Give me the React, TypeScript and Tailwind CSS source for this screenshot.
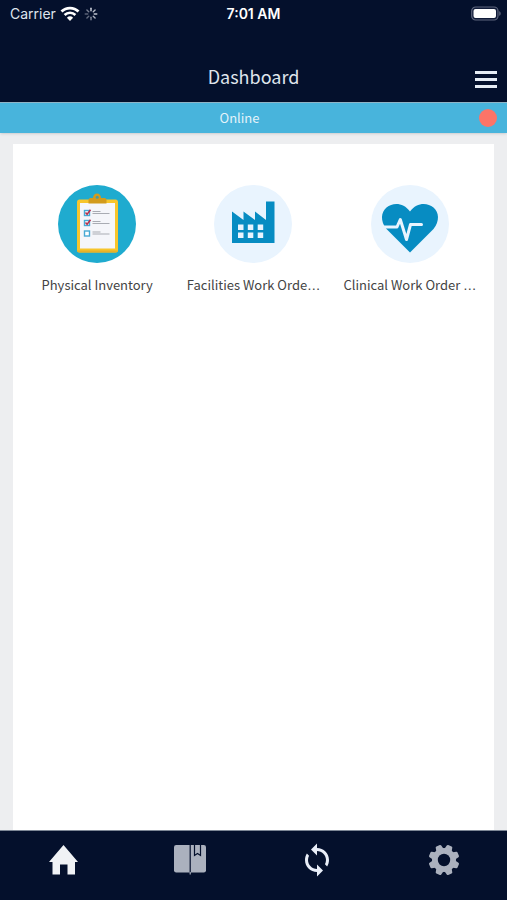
import type { ReactNode } from "react";

function WifiIcon() {
  return (
    <svg className="h-4 w-5" viewBox="0 0 20 16" fill="none" stroke="#fff" aria-hidden="true">
      <path d="M1.5 5.6a12 12 0 0 1 17 0" strokeWidth="2.8" />
      <path d="M4.6 9a7.6 7.6 0 0 1 10.8 0" strokeWidth="2.6" />
      <path d="M10 15 6.9 11.7a4.5 4.5 0 0 1 6.2 0Z" fill="#fff" stroke="none" />
    </svg>
  );
}

function SpinnerIcon() {
  const spokes = [1, 0.85, 0.9, 0.8, 0.6, 0.45, 0.4, 0.55];
  return (
    <svg className="size-3.5" viewBox="0 0 14 14" stroke="#d5d9e2" strokeWidth="1.4" strokeLinecap="round" aria-hidden="true">
      {spokes.map((o, i) => (
        <path key={i} d="M7 1.2v2.6" opacity={o} transform={`rotate(${i * 45} 7 7)`} />
      ))}
    </svg>
  );
}

function BatteryIcon() {
  return (
    <svg className="h-4 w-[30px]" viewBox="0 0 30 16" aria-hidden="true">
      <rect x="0.7" y="1" width="26.3" height="13" rx="4" fill="#101b38" stroke="#5d657c" strokeWidth="1.2" />
      <rect x="2.5" y="3" width="22.5" height="9" rx="2" fill="#fff" />
      <path d="M28.200 5.200c2 .6 2 4 0 4.600Z" fill="#5d657c" />
    </svg>
  );
}

function ClipboardIcon() {
  return (
    <svg className="size-[78px]" viewBox="0 0 78 78" aria-hidden="true">
      <circle cx="39" cy="39" r="39" fill="#1fabcf" />
      <rect x="19" y="14.5" width="41" height="53" rx="2.5" fill="#f7c52b" />
      <path d="M19 65.5a2 2 0 0 0 2 2h37a2 2 0 0 0 2-2Z" fill="#e6b02a" />
      <rect x="22" y="18" width="35" height="45.5" fill="#f5f6fa" />
      <path d="M30.500 18.500v-3.500q0-2 2-2h2.500a4 4.500 0 0 1 8 0H46.500q2 0 2 2v3.500Z" fill="#d29b1c" />
      <circle cx="39.2" cy="12.2" r="1.5" fill="#4a9ba0" />
      {[25.5, 35.5, 46].map((y, i) => (
        <g key={y}>
          <rect x="26.5" y={y} width="5" height="5" fill="#fff" stroke="#48a9d4" strokeWidth="1.4" />
          {i < 2 && <path d={`M27.500 ${y + 2}l1.600 1.800 3.400-4.600`} fill="none" stroke="#b8324c" strokeWidth="1.5" />}
          <path d={`M34.500 ${y + 1}h8M34.500 ${y + 3}h17`} stroke="#a9acb3" strokeWidth="1" />
        </g>
      ))}
    </svg>
  );
}

function FactoryIcon() {
  return (
    <svg className="size-[78px]" viewBox="0 0 78 78" aria-hidden="true">
      <circle cx="39" cy="39" r="39" fill="#e9f4fe" />
      <path d="M18 26.500 29.500 35v-8.500L41 35v-8.500L52 35V16.500h8.500V58H18Z" fill="#078cc2" />
      <path d="M24 39.500h5.500v5.500h-5.500ZM33.800 39.500h5.500v5.500h-5.500ZM43.700 39.500h5.500v5.500h-5.500ZM24 47.500h5.500v5.500h-5.500ZM33.800 47.500h5.500v5.500h-5.500ZM43.700 47.500h5.500v5.500h-5.500Z" fill="#e9f4fe" />
    </svg>
  );
}

function HeartIcon() {
  return (
    <svg className="size-[78px]" viewBox="0 0 78 78" aria-hidden="true">
      <circle cx="39" cy="39" r="39" fill="#e9f4fe" />
      <path d="M39 67.500 15.500 44C9 36 10 27 15.500 22.500c6.500-5.300 17-5 23.500 4 6.500-9 17-9.300 23.500-4C68 27 69 36 62.500 44Z" fill="#078cc2" />
      <path d="M11 42h15l3.300-7.500L35.500 54.500 39.500 39.500h11" fill="none" stroke="#e9f4fe" strokeWidth="3" strokeLinecap="round" strokeLinejoin="round" />
    </svg>
  );
}

function HomeIcon() {
  return (
    <svg className="size-8" viewBox="0 0 32 32" fill="#f0f2f5" aria-hidden="true">
      <path d="M16.500 1 31 18H28V30.500H20.500V20.500H13V30.500H5.500V18H2Z" />
    </svg>
  );
}

function BookIcon() {
  return (
    <svg className="h-8 w-[34px]" viewBox="0 0 34 32" aria-hidden="true">
      <rect x="1" y="1" width="32" height="27.5" rx="2.2" fill="#abb1be" />
      <path d="M17.200 1v29" stroke="#04102c" strokeWidth="1.2" />
      <path d="M17.200 28v2.500" stroke="#abb1be" strokeWidth="1.2" />
      <path d="M21.500 1v10.500l3-2 3 2V1" fill="#abb1be" stroke="#04102c" strokeWidth="1.2" />
    </svg>
  );
}

function SyncIcon() {
  return (
    <svg className="size-9" viewBox="0 0 24 24" fill="#e9eef8" aria-hidden="true">
      <path d="M12 4V1L8 5l4 4V6c3.310 0 6 2.690 6 6 0 1.010-.250 1.970-.700 2.800l1.460 1.460C19.540 15.030 20 13.570 20 12c0-4.420-3.580-8-8-8zm0 14c-3.310 0-6-2.690-6-6 0-1.010.250-1.970.700-2.800L5.240 7.740C4.460 8.970 4 10.430 4 12c0 4.420 3.580 8 8 8v3l4-4-4-4v3z" />
    </svg>
  );
}

function GearIcon() {
  const teeth = [22.5, 67.5, 112.5, 157.5, 202.5, 247.5, 292.5, 337.5];
  return (
    <svg className="size-8" viewBox="0 0 32 32" aria-hidden="true">
      <g fill="#abb1be">
        {teeth.map((a) => (
          <path key={a} d="M12 6 13 1.600q.2-1 1.200-1h3.600q1 0 1.200 1L20 6Z" transform={`rotate(${a} 16 16)`} />
        ))}
        <circle cx="16" cy="16" r="12" />
      </g>
      <circle cx="16" cy="16" r="6.2" fill="#04102c" />
    </svg>
  );
}

function Tile({ icon, label, cut = false }: { icon: ReactNode; label: string; cut?: boolean }) {
  return (
    <button type="button" className="flex flex-col items-center gap-3 whitespace-nowrap text-[13px] leading-5 text-[#444444]">
      {icon}
      <span>
        {label}
        {cut && <span className="font-['DejaVu_Sans',sans-serif]">…</span>}
      </span>
    </button>
  );
}

export default function App() {
  const tabs = [
    { name: "Home", icon: <HomeIcon /> },
    { name: "Catalog", icon: <BookIcon /> },
    { name: "Sync", icon: <SyncIcon /> },
    { name: "Settings", icon: <GearIcon /> },
  ];
  return (
    <div className="flex min-h-screen flex-col bg-[#edeef0] font-['Noto_Sans_CJK_SC','Noto_Sans',sans-serif]">
      <header className="bg-[#04102c] text-[#dfe4ec]">
        <div className="grid h-[50px] grid-cols-[1fr_auto_1fr] items-start px-1.5 pt-1 font-['Inter',sans-serif] text-sm leading-5">
          <div className="flex items-center gap-1 pl-1">
            <span>Carrier</span>
            <WifiIcon />
            <SpinnerIcon />
          </div>
          <div className="text-center font-semibold text-white">7:01 AM</div>
          <div className="flex justify-end pt-0.5">
            <BatteryIcon />
          </div>
        </div>
        <div className="grid h-[52px] grid-cols-[1fr_auto_1fr] items-center px-2.5">
          <h1 className="col-start-2 text-lg leading-6">Dashboard</h1>
          <button type="button" aria-label="Menu" className="flex flex-col gap-1 justify-self-end pt-1.5">
            <span className="h-[3px] w-[22px] bg-[#e6ecf4]" />
            <span className="h-[3px] w-[22px] bg-[#e6ecf4]" />
            <span className="h-[3px] w-[22px] bg-[#e6ecf4]" />
          </button>
        </div>
      </header>
      <div className="flex h-[31px] items-center border-t border-[#8fb4c6] bg-[#48b4dc] pr-2.5 text-[13px] leading-5 text-[#e3f3fa] shadow-sm">
        <span className="grow text-center">Online</span>
        <span className="size-[18px] rounded-full bg-[#fc7468]" />
      </div>
      <main className="flex grow flex-col px-[13px] pt-[11px]">
        <section className="grid grow auto-rows-max grid-cols-3 bg-white px-1.5 pt-[41px]">
          <Tile icon={<ClipboardIcon />} label="Physical Inventory" />
          <Tile icon={<FactoryIcon />} label="Facilities Work Orde" cut />
          <Tile icon={<HeartIcon />} label="Clinical Work Order " cut />
        </section>
      </main>
      <nav className="grid h-[70px] grid-cols-4 border-t border-[#7d8796] bg-[#04102c] pb-3">
        {tabs.map((t) => (
          <button key={t.name} type="button" aria-label={t.name} className="flex items-center justify-center">
            {t.icon}
          </button>
        ))}
      </nav>
    </div>
  );
}
